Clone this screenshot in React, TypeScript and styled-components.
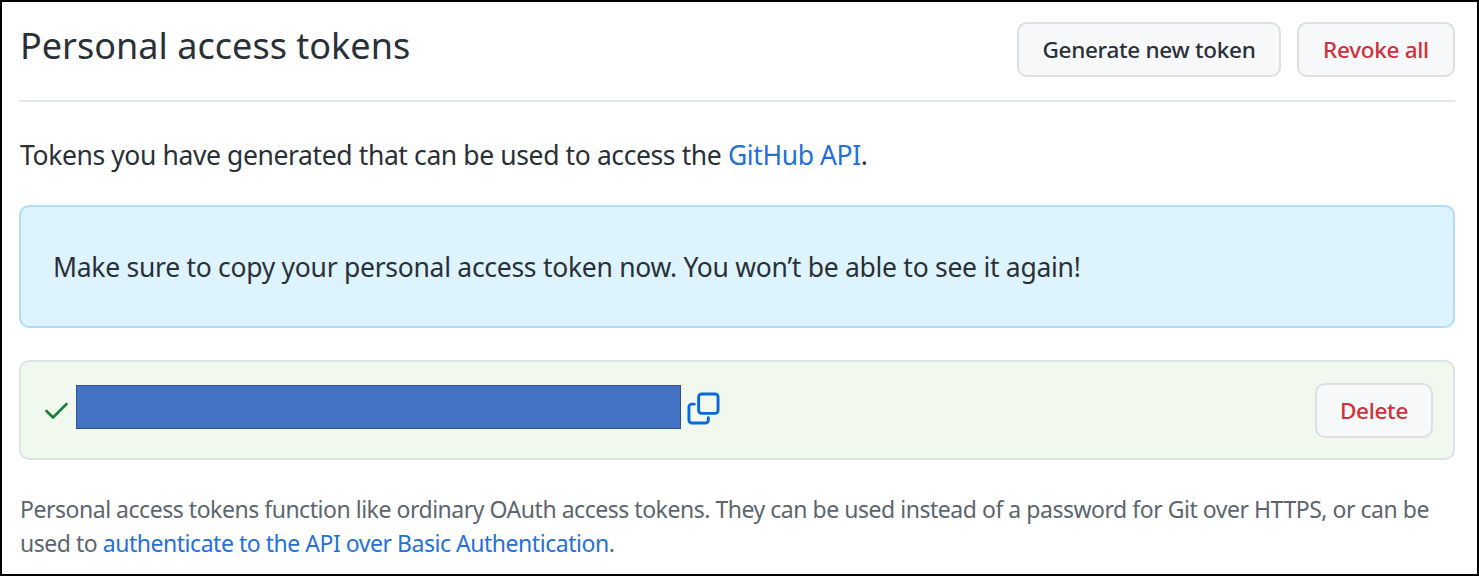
import React from 'react'
import styled, { createGlobalStyle } from 'styled-components'

const GlobalStyle = createGlobalStyle`
  html, body {
    margin: 0;
    padding: 0;
    background: #fff;
  }
  * {
    box-sizing: border-box;
  }
`

const Frame = styled.div`
  width: 1479px;
  height: 576px;
  border: 2px solid #000;
  padding: 0 22px 0 17px;
  background: #fff;
  color: #2a3038;
  font-family: 'Noto Sans', 'Open Sans', sans-serif;
  overflow: hidden;
`

const Header = styled.header`
  display: flex;
  align-items: flex-start;
  justify-content: space-between;
  height: 100px;
  border-bottom: 2px solid #e3e7eb;
`

const Title = styled.h2`
  margin: 21px 0 0 1px;
  font-size: 36px;
  line-height: 46px;
  font-weight: 400;
  letter-spacing: 0.02px;
`

const Actions = styled.div`
  display: flex;
  gap: 16px;
  margin-top: 20px;
`

const Button = styled.button<{ $danger?: boolean; $width: number }>`
  width: ${p => p.$width}px;
  height: 55px;
  padding: 0;
  border: 2px solid #dcdfe3;
  border-radius: 10px;
  background: #f6f8fa;
  color: ${p => (p.$danger ? '#d02f3c' : '#2a3038')};
  font-family: inherit;
  font-size: 22.5px;
  font-weight: 500;
  letter-spacing: -0.28px;
`

const Intro = styled.p`
  margin: 33px 0 0 1px;
  font-size: 26.5px;
  line-height: 40px;
  letter-spacing: -0.39px;
`

const Link = styled.a`
  color: #2470d8;
  text-decoration: none;
`

const Flash = styled.div`
  display: flex;
  align-items: center;
  height: 123px;
  margin-top: 30px;
  padding: 0 32px;
  border: 2px solid #b0dcfb;
  border-radius: 10px;
  background: #ddf4ff;
  font-size: 26.5px;
  letter-spacing: -0.28px;
`

const TokenRow = styled.div`
  display: flex;
  align-items: center;
  height: 100px;
  margin-top: 32px;
  padding: 0 20px 0 23px;
  border: 2px solid #dde3e4;
  border-radius: 10px;
  background: #f1f8ee;
`

const CheckMark = styled.svg`
  flex: none;
  width: 26px;
  height: 26px;
  color: #1a7f37;
`

const RedactedToken = styled.div`
  flex: none;
  width: 605px;
  height: 44px;
  margin: -6px 6px 0 6px;
  background: #4472c4;
  border: 1.5px solid #2f528f;
`

const CopyIcon = styled.svg`
  flex: none;
  width: 33px;
  height: 33px;
  margin-top: -3px;
  color: #0969da;
`

const Spacer = styled.div`
  flex: 1;
`

const Note = styled.p`
  margin: 32px 0 0 1px;
  font-size: 23px;
  line-height: 34px;
  color: #5c656f;
  letter-spacing: -0.47px;
`

const App: React.FC = () => {
  return (
    <Frame>
      <GlobalStyle />
      <Header>
        <Title>Personal access tokens</Title>
        <Actions>
          <Button $width={264}>Generate new token</Button>
          <Button $danger $width={158}>Revoke all</Button>
        </Actions>
      </Header>
      <Intro>
        Tokens you have generated that can be used to access the <Link>GitHub API</Link>.
      </Intro>
      <Flash>Make sure to copy your personal access token now. You won’t be able to see it again!</Flash>
      <TokenRow>
        <CheckMark viewBox="0 0 26 26" fill="none" stroke="currentColor" strokeWidth="2.6" strokeLinecap="round" strokeLinejoin="round">
          <path d="M2.5 14l6.5 6.5L22.5 7" />
        </CheckMark>
        <RedactedToken />
        <CopyIcon viewBox="0 0 34 34" fill="none" stroke="currentColor" strokeWidth="3" strokeLinecap="round" strokeLinejoin="round">
          <path d="M7.5 12.5H5a3 3 0 0 0-3 3V29a3 3 0 0 0 3 3h14a3 3 0 0 0 3-3v-2.5" />
          <rect x="12" y="2" width="20" height="20" rx="3" />
        </CopyIcon>
        <Spacer />
        <Button $danger $width={118}>Delete</Button>
      </TokenRow>
      <Note>
        Personal access tokens function like ordinary OAuth access tokens. They can be used instead of a password for Git over HTTPS, or can be used to <Link>authenticate to the API over Basic Authentication</Link>.
      </Note>
    </Frame>
  )
}

export default App
